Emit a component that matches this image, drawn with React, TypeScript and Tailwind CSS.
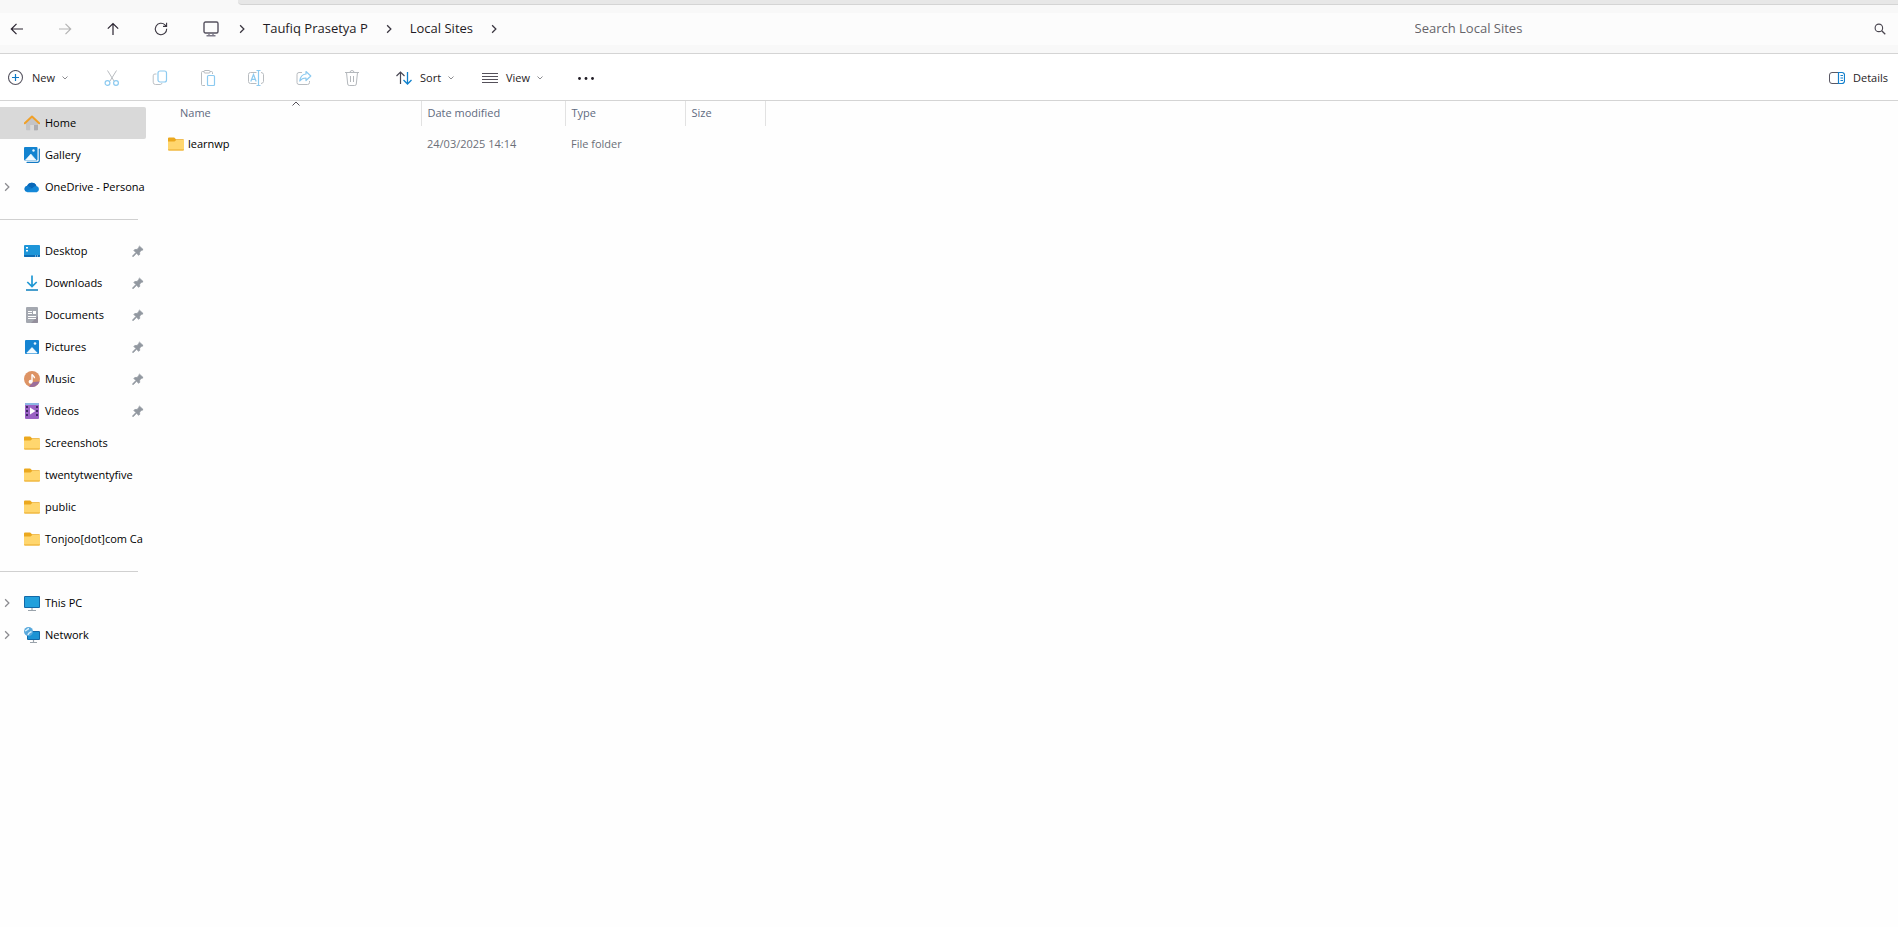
import { useState } from 'react';
import type { ReactNode } from 'react';

type IconName =
  | 'home'
  | 'gallery'
  | 'onedrive'
  | 'desktop'
  | 'downloads'
  | 'documents'
  | 'pictures'
  | 'music'
  | 'videos'
  | 'folder'
  | 'pc'
  | 'network';

interface NavItem {
  label: string;
  icon: IconName;
  pinned?: boolean;
  expandable?: boolean;
}

const NAV_GROUPS: NavItem[][] = [
  [
    { label: 'Home', icon: 'home' },
    { label: 'Gallery', icon: 'gallery' },
    { label: 'OneDrive - Persona', icon: 'onedrive', expandable: true },
  ],
  [
    { label: 'Desktop', icon: 'desktop', pinned: true },
    { label: 'Downloads', icon: 'downloads', pinned: true },
    { label: 'Documents', icon: 'documents', pinned: true },
    { label: 'Pictures', icon: 'pictures', pinned: true },
    { label: 'Music', icon: 'music', pinned: true },
    { label: 'Videos', icon: 'videos', pinned: true },
    { label: 'Screenshots', icon: 'folder' },
    { label: 'twentytwentyfive', icon: 'folder' },
    { label: 'public', icon: 'folder' },
    { label: 'Tonjoo[dot]com Ca', icon: 'folder' },
  ],
  [
    { label: 'This PC', icon: 'pc', expandable: true },
    { label: 'Network', icon: 'network', expandable: true },
  ],
];

const FILES = [{ name: 'learnwp', modified: '24/03/2025 14:14', type: 'File folder', size: '' }];

function Svg({ children, className = 'size-4' }: { children: ReactNode; className?: string }) {
  return (
    <svg viewBox="0 0 16 16" fill="none" className={`shrink-0 ${className}`} aria-hidden="true">
      {children}
    </svg>
  );
}

function ItemIcon({ name }: { name: IconName }) {
  switch (name) {
    case 'home':
      return (
        <Svg>
          <path d="M2 7.5 8 2.5l6 5V14.5a.8.8 0 0 1-.8.8H10V10H6.2v5.3H2.8a.8.8 0 0 1-.8-.8Z" fill="#c4c4c6" />
          <path d="M10 10h4v4.5a.8.8 0 0 1-.8.8H10Z" fill="#adadb0" />
          <path d="M.8 8.2 8 1.500l7.200 6.700" stroke="#f0a028" strokeWidth="2" strokeLinecap="round" strokeLinejoin="round" />
        </Svg>
      );
    case 'gallery':
      return (
        <Svg>
          <path d="M3 15.300h10.500a1.800 1.800 0 0 0 1.800-1.800V2" stroke="#1279c4" strokeWidth="1.200" strokeLinecap="round" />
          <rect x="0" y="0" width="13.500" height="13.500" rx="1" fill="#1383d0" />
          <path d="M1.500 13 6.800 7 12 13Z" fill="#f2faff" stroke="#f2faff" strokeWidth=".6" strokeLinejoin="round" />
          <circle cx="9.500" cy="3.500" r="1.200" fill="#e4f4ff" />
        </Svg>
      );
    case 'onedrive':
      return (
        <Svg>
          <path d="M3.500 13.200A3.300 3.300 0 0 1 3.200 6.700 5 5 0 0 1 12.400 7a3.200 3.200 0 0 1 .3 6.200Z" fill="#1488d8" />
          <path d="M3.200 6.700A5 5 0 0 1 12.400 7c-2.400.1-3.500 1.500-4.400 2.600L3.200 6.700Z" fill="#0a68b8" />
          <path d="M3.200 6.700 8 9.600l-6.500 2.700A3.300 3.300 0 0 1 3.200 6.700Z" fill="#0f7bcb" />
        </Svg>
      );
    case 'desktop':
      return (
        <Svg>
          <rect x="0" y="2" width="16" height="12" rx="1" fill="#1e95d8" />
          <path d="M0 12h16v1a1 1 0 0 1-1 1H1a1 1 0 0 1-1-1Z" fill="#0e6cb4" />
          <path d="M2 4h2v1.500H2zM2 7h2v1.500H2z" fill="#fff" />
          <path d="M11 12.500h1v1h-1zM13 12.500h1v1h-1z" fill="#cfe9fa" />
        </Svg>
      );
    case 'downloads':
      return (
        <Svg>
          <path d="M8 .5v11M3.300 7 8 11.600 12.700 7" stroke="#2098d4" strokeWidth="1.700" />
          <path d="M2 15h12" stroke="#1a86c0" strokeWidth="1.600" />
        </Svg>
      );
    case 'documents':
      return (
        <Svg>
          <rect x="2" y="0" width="12" height="16" rx="1" fill="#a4a8b0" />
          <path d="M14 9v6a1 1 0 0 1-1 1H7Z" fill="#948f9c" />
          <path d="M4 4.500h4M4 6.500h4M4 9.500h8M4 11.500h8" stroke="#fff" />
          <rect x="9" y="4" width="3" height="3" fill="#fff" />
        </Svg>
      );
    case 'pictures':
      return (
        <Svg>
          <rect x="1" y="1" width="14" height="14" rx="1" fill="#1584d2" />
          <path d="M2.800 14 8 8.600l5.200 5.400Z" fill="#f4fbff" stroke="#f4fbff" strokeWidth=".8" strokeLinejoin="round" />
          <circle cx="11" cy="4.500" r="1.300" fill="#e4f4ff" />
        </Svg>
      );
    case 'music':
      return (
        <Svg>
          <circle cx="8" cy="8" r="8" fill="#dd9364" />
          <path d="M15.600 10.500A8 8 0 0 1 5 15.400L9 11Z" fill="#9c6f9c" />
          <circle cx="6.600" cy="10.800" r="2" fill="#fff" />
          <path d="M8 10.800V3.200c.4 1.600 2.700 1.700 2.500 4" stroke="#fff" strokeWidth="1.400" />
        </Svg>
      );
    case 'videos':
      return (
        <Svg>
          <rect x="1" y="0" width="14" height="16" rx="1" fill="#9a62c4" />
          <path d="M1 1a1 1 0 0 1 1-1h12a1 1 0 0 1 1 1v1H1Z" fill="#8cb8e4" />
          <path d="M2 3h2v2H2zM2 7h2v2H2zM2 11h2v2H2zM12 3h2v2h-2zM12 7h2v2h-2zM12 11h2v2h-2z" fill="#3f2a66" />
          <path d="M6 4.500v7L11.500 8Z" fill="#fff" />
        </Svg>
      );
    case 'folder':
      return (
        <Svg>
          <path d="M0 2.500a1 1 0 0 1 1-1h5.200L8 3.200h7a1 1 0 0 1 1 1V7H0Z" fill="#eba81e" />
          <path d="M0 5.500h6.500L8.200 4H16v9.500a1 1 0 0 1-1 1H1a1 1 0 0 1-1-1Z" fill="#ffd66e" />
          <path d="M0 13.500h16a1 1 0 0 1-1 1H1a1 1 0 0 1-1-1Z" fill="#e9a92a" />
        </Svg>
      );
    case 'pc':
      return (
        <Svg>
          <path d="M8 13v2.500M4 15.500h8" stroke="#9aa3ab" strokeWidth="1.200" />
          <rect x="0" y="1" width="16" height="12" rx="1" fill="#1269a8" />
          <rect x="1" y="2" width="14" height="10" fill="#22a0dc" />
        </Svg>
      );
    case 'network':
      return (
        <Svg>
          <path d="M9.500 12v3.500M6 15.500h7" stroke="#9aa3ab" strokeWidth="1.200" />
          <rect x="3" y="4" width="13" height="9" rx="1" fill="#1269a8" />
          <rect x="4" y="5" width="11" height="7" fill="#1c93d4" />
          <circle cx="4.500" cy="4.500" r="4.500" fill="#58a8dc" />
          <path d="M1 3.500C2.500 4.500 3 2 5 1.500M4 8c0-2 1.500-2.500 3.500-3.500" stroke="#d8f0fc" strokeWidth="1.400" />
        </Svg>
      );
  }
}

function Chevron({ className }: { className: string }) {
  return (
    <Svg className={className}>
      <path d="m5 2 6 6-6 6" stroke="currentColor" strokeWidth="2" />
    </Svg>
  );
}

function ChevronDown() {
  return (
    <Svg className="size-2 text-[#8c8c90]">
      <path d="m3 5 5 5 5-5" stroke="currentColor" strokeWidth="2" />
    </Svg>
  );
}

function Pin() {
  return (
    <Svg className="mr-0.5 size-3">
      <path d="M10 1.500 14.800 6l-1.500 1.200-.8-.2-2.300 2.500.1 3-1.400 1.200L6 11 2 15.200.9 15.400 1 14.300 5.200 10 2.500 7.300 3.700 6l3-.1 2.500-2.500-.3-.9Z" fill="#9298a0" stroke="#9298a0" />
    </Svg>
  );
}

// Back, forward, up and refresh
function HistoryButtons() {
  const base = 'flex size-8 items-center justify-center rounded hover:bg-black/5';
  return (
    <div className="flex gap-4 pl-px">
      <button type="button" aria-label="Back" className={`${base} text-[#2a2430]`}>
        <Svg>
          <path d="M14 8H2.500M7.500 2.800 2.300 8l5.200 5.200" stroke="currentColor" strokeWidth="1.200" />
        </Svg>
      </button>
      <button type="button" aria-label="Forward" disabled className={`${base} text-[#b4b4b4]`}>
        <Svg>
          <path d="M2 8h11.500M8.500 2.800 13.700 8l-5.200 5.200" stroke="currentColor" strokeWidth="1.200" />
        </Svg>
      </button>
      <button type="button" aria-label="Up" className={`${base} text-[#2a2430]`}>
        <Svg>
          <path d="M8 14V2.500M2.800 7.700 8 2.500l5.200 5.200" stroke="currentColor" strokeWidth="1.200" />
        </Svg>
      </button>
      <button type="button" aria-label="Refresh" className={`${base} text-[#3a3640]`}>
        <Svg>
          <path d="M13.700 7.800A5.700 5.700 0 1 1 12 3.900l1.500 1.400M13.600 1.800v3.600H10" stroke="currentColor" strokeWidth="1.100" />
        </Svg>
      </button>
    </div>
  );
}

function AddressBar() {
  const separator = (
    <span className="flex w-6.5 justify-center">
      <Chevron className="size-[10px] text-[#3a3640]" />
    </span>
  );
  return (
    <header className="flex h-[49px] items-center border-b border-[#d4d4d4] bg-[#f8f8f8]">
      <div className="flex h-8 w-full items-center bg-[#fcfcfc]">
        <HistoryButtons />
        <nav aria-label="Address" className="ml-4 flex flex-1 items-center text-[13px] text-[#1f1b24]">
          <button type="button" aria-label="This PC" className="flex h-8 w-9 items-center justify-center">
            <Svg>
              <rect x="1" y="1" width="14" height="11" rx="1.500" stroke="#55515e" strokeWidth="1.400" />
              <path d="M6 12v2.500M10 12v2.500M3.500 14.800h9" stroke="#7d7988" strokeWidth="1.400" />
            </Svg>
          </button>
          {separator}
          <a href="#user" className="px-2">Taufiq Prasetya P</a>
          {separator}
          <a href="#local-sites" className="px-2">Local Sites</a>
          {separator}
        </nav>
        <div className="flex w-[26%] items-center pr-3 pl-2.5">
          <input
            type="text"
            aria-label="Search Local Sites"
            placeholder="Search Local Sites"
            className="min-w-0 flex-1 bg-transparent text-[13px] text-[#1f1b24] outline-none placeholder:text-[#66646a]"
          />
          <button type="button" aria-label="Search">
            <Svg className="size-3">
              <circle cx="6.500" cy="6.500" r="5" stroke="#4a4650" strokeWidth="1.500" />
              <path d="m10.300 10.300 4.700 4.700" stroke="#4a4650" strokeWidth="1.700" />
            </Svg>
          </button>
        </div>
      </div>
    </header>
  );
}

// Everything here needs a selection, so all of it is greyed out
const FILE_ACTIONS: { label: string; drawing: ReactNode }[] = [
  {
    label: 'Cut',
    drawing: (
      <>
        <path d="M3.500.5 10 11M12.500.5 6 11" stroke="#b8bcc0" />
        <circle cx="3.500" cy="13" r="2.400" stroke="#8ccaf0" strokeWidth="1.200" />
        <circle cx="12" cy="13" r="2.400" stroke="#8ccaf0" strokeWidth="1.200" />
      </>
    ),
  },
  {
    label: 'Copy',
    drawing: (
      <>
        <path d="M4.500 4H3A1.800 1.800 0 0 0 1.200 5.800v6.400A2.300 2.300 0 0 0 3.500 14.500h4.700A1.800 1.800 0 0 0 10 13" stroke="#bcc0c4" />
        <rect x="6" y="1" width="8.500" height="11" rx="2" stroke="#8ccaf0" strokeWidth="1.200" />
      </>
    ),
  },
  {
    label: 'Paste',
    drawing: (
      <>
        <path d="M5 15.500H2.500a1 1 0 0 1-1-1v-12a1 1 0 0 1 1-1H4M10 1.500h1.500a1 1 0 0 1 1 1V4" stroke="#b8bcc0" />
        <rect x="4" y=".5" width="6" height="2.500" rx="1" stroke="#b8bcc0" />
        <rect x="7.500" y="5.500" width="7" height="10" rx="1" stroke="#8ccaf0" strokeWidth="1.200" />
      </>
    ),
  },
  {
    label: 'Rename',
    drawing: (
      <>
        <path d="M8.500 2.500h-6a2 2 0 0 0-2 2v7a2 2 0 0 0 2 2h6M13 2.500a2.500 2.500 0 0 1 2.500 2v7a2.500 2.500 0 0 1-2.500 2" stroke="#b8bcc0" />
        <path d="M2.800 11.500 5.500 4.500l2.700 7M3.700 9.300h3.600M8.500.5h4M8.500 15.500h4M10.500.5v15" stroke="#8ccaf0" strokeWidth="1.200" />
      </>
    ),
  },
  {
    label: 'Share',
    drawing: (
      <>
        <path d="M6 2.500H3a2 2 0 0 0-2 2v8a2 2 0 0 0 2 2h8.500a2 2 0 0 0 2-2V11" stroke="#b8bcc0" />
        <path d="M10 1.500 14.800 6 10 10.500V8C7 8 5.300 8.800 3.800 11 4.200 7 6.500 4.300 10 4Z" stroke="#8ccaf0" strokeWidth="1.200" strokeLinejoin="round" />
      </>
    ),
  },
  {
    label: 'Delete',
    drawing: (
      <path d="M1 2.500h14M6 2.500a2 2 0 0 1 4 0M2.500 2.500l1.200 11.500a1.600 1.600 0 0 0 1.600 1.500h5.400a1.600 1.600 0 0 0 1.600-1.500l1.200-11.500M6.500 6v6M9.500 6v6" stroke="#b4b8bc" />
    ),
  },
];

function Toolbar() {
  return (
    <div role="toolbar" className="flex h-[47px] items-center border-b border-[#d4d4d4] bg-white pt-0.5 text-[11px] text-[#1f1b24]">
      <button type="button" className="flex h-8 w-24 items-center pl-2">
        <Svg>
          <circle cx="7.500" cy="7.500" r="7" stroke="#5a5864" strokeWidth="1.100" />
          <path d="M4 7.500h7M7.500 4v7" stroke="#0f78c4" strokeWidth="1.200" />
        </Svg>
        <span className="mr-1.5 ml-2">New</span>
        <ChevronDown />
      </button>
      <div className="flex gap-4">
        {FILE_ACTIONS.map((action) => (
          <button key={action.label} type="button" aria-label={action.label} disabled className="flex size-8 items-center justify-center">
            <Svg>{action.drawing}</Svg>
          </button>
        ))}
      </div>
      <button type="button" className="ml-5 flex h-8 w-20 items-center pl-2">
        <Svg>
          <path d="M4.500 14V2M.5 6l4-4 4 4" stroke="#4a4854" strokeWidth="1.200" />
          <path d="M11.500 2v12M7.500 10l4 4 4-4" stroke="#0f80cc" strokeWidth="1.300" />
        </Svg>
        <span className="mr-1.5 ml-2">Sort</span>
        <ChevronDown />
      </button>
      <button type="button" className="ml-1.5 flex h-8 w-20 items-center pl-2">
        <Svg>
          <path d="M0 3.500h16M0 6.500h16M0 9.500h16M0 12.500h16" stroke="#55515a" />
        </Svg>
        <span className="mr-1.5 ml-2">View</span>
        <ChevronDown />
      </button>
      <button type="button" aria-label="See more" className="ml-4 flex size-8 items-center justify-center">
        <Svg>
          <circle cx="1.500" cy="8.500" r="1.400" fill="#1f1b24" />
          <circle cx="8" cy="8.500" r="1.400" fill="#1f1b24" />
          <circle cx="14.500" cy="8.500" r="1.400" fill="#1f1b24" />
        </Svg>
      </button>
      <button type="button" className="ml-auto flex h-8 items-center gap-2 pr-2.5">
        <Svg>
          <path d="M9.500 2.500H3A2.500 2.500 0 0 0 .5 5v6A2.500 2.500 0 0 0 3 13.500h6.500" stroke="#5a5864" />
          <path d="M9.500 2.500H13A2.500 2.500 0 0 1 15.500 5v6a2.500 2.500 0 0 1-2.500 2.500H9.500ZM11.500 5.500h2.500M11.500 8h2.500M11.500 10.500h2.500" stroke="#1580cc" strokeWidth="1.200" />
        </Svg>
        Details
      </button>
    </div>
  );
}

function Sidebar() {
  const [selected, setSelected] = useState('Home');

  return (
    <aside className="w-[146px] shrink-0 pt-1.5 text-[11px] text-black">
      {NAV_GROUPS.map((group, i) => (
        <div key={i}>
          {i > 0 && (
            <div className="flex h-8 items-center pr-2">
              <hr className="w-full border-[#d0d0d0]" />
            </div>
          )}
          {group.map((item) => (
            <button
              key={item.label}
              type="button"
              onClick={() => setSelected(item.label)}
              className={`flex h-8 w-full items-center rounded-r-xs text-left ${selected === item.label ? 'bg-[#d9d9d9]' : 'hover:bg-[#f0f0f0]'}`}
            >
              <span className="w-6 shrink-0 pl-0.5">
                {item.expandable && <Chevron className="size-[10px] text-[#8c8c90]" />}
              </span>
              <ItemIcon name={item.icon} />
              <span className="ml-[5px] flex-1 whitespace-nowrap">{item.label}</span>
              {item.pinned && <Pin />}
            </button>
          ))}
        </div>
      ))}
    </aside>
  );
}

function FileTable() {
  const th = 'h-[25px] border-r border-[#e2e2e2] pl-1.5 font-normal';
  return (
    <main className="flex-1 pl-3.5">
      <table className="table-fixed text-left text-[11px] text-[#6b6f78]">
        <thead>
          <tr className="text-[#5f6a80]">
            <th className="relative h-[25px] w-[261px] border-r border-[#e2e2e2] pl-5 font-normal">
              Name
              <span className="absolute inset-x-0 top-0 flex justify-center pl-3">
                <svg viewBox="0 0 8 5" className="h-[5px] w-2" fill="none" aria-hidden="true">
                  <path d="M.5 4.500 4 1l3.500 3.500" stroke="#55515a" />
                </svg>
              </span>
            </th>
            <th className={`${th} w-36`}>Date modified</th>
            <th className={`${th} w-[120px]`}>Type</th>
            <th className={`${th} w-20`}>Size</th>
          </tr>
        </thead>
        <tbody>
          {FILES.map((file) => (
            <tr key={file.name} className="h-9">
              <td className="pl-2">
                <div className="flex items-center gap-1 text-black">
                  <ItemIcon name="folder" />
                  {file.name}
                </div>
              </td>
              <td className="pl-1.5">{file.modified}</td>
              <td className="pl-1.5">{file.type}</td>
              <td className="pl-1.5">{file.size}</td>
            </tr>
          ))}
        </tbody>
      </table>
    </main>
  );
}

export default function App() {
  return (
    <div className="flex min-h-screen flex-col bg-[#fefefe] font-['Open_Sans','Noto_Sans',sans-serif]">
      {/* Bottom edge of the tab strip, the open tab sits on the left */}
      <div className="flex h-[5px] bg-[#f8f8f8]">
        <div className="w-[238px]" />
        <div className="flex-1 rounded-bl border-b border-[#d4d4d4] bg-[#e7e7e7]" />
      </div>
      <AddressBar />
      <Toolbar />
      <div className="flex flex-1">
        <Sidebar />
        <FileTable />
      </div>
    </div>
  );
}
